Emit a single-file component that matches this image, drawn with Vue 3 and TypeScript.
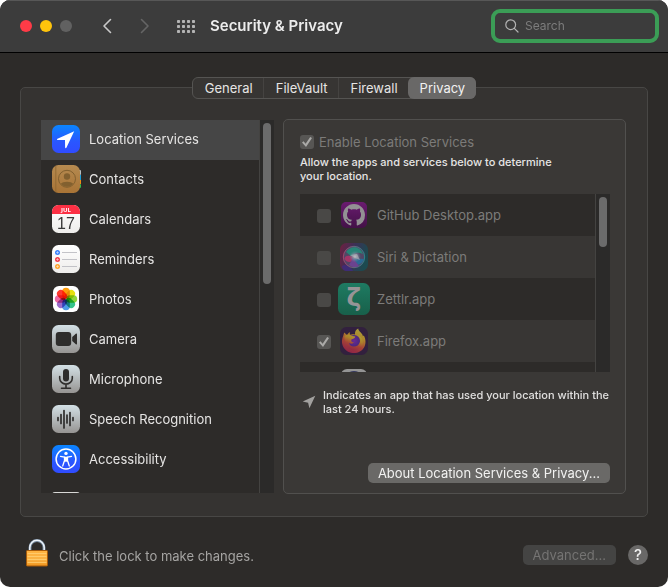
<script setup lang="ts">
import { ref } from 'vue'

interface SidebarItem {
  id: string
  label: string
}

interface AppEntry {
  id: string
  label: string
  allowed: boolean
}

const tabs: string[] = ['General', 'FileVault', 'Firewall', 'Privacy']
const activeTab = ref('Privacy')
const query = ref('')

const services: SidebarItem[] = [
  { id: 'location', label: 'Location Services' },
  { id: 'contacts', label: 'Contacts' },
  { id: 'calendars', label: 'Calendars' },
  { id: 'reminders', label: 'Reminders' },
  { id: 'photos', label: 'Photos' },
  { id: 'camera', label: 'Camera' },
  { id: 'microphone', label: 'Microphone' },
  { id: 'speech', label: 'Speech Recognition' },
  { id: 'accessibility', label: 'Accessibility' },
]
const selected = ref('location')

const apps: AppEntry[] = [
  { id: 'github', label: 'GitHub Desktop.app', allowed: false },
  { id: 'siri', label: 'Siri & Dictation', allowed: false },
  { id: 'zettlr', label: 'Zettlr.app', allowed: false },
  { id: 'firefox', label: 'Firefox.app', allowed: true },
]

const petals: { color: string; angle: number }[] = [
  { color: '#ff9d0a', angle: 0 },
  { color: '#e6e010', angle: 45 },
  { color: '#8fd53c', angle: 90 },
  { color: '#35c48b', angle: 135 },
  { color: '#4f9be8', angle: 180 },
  { color: '#9b6ccb', angle: 225 },
  { color: '#ee6aa5', angle: 270 },
  { color: '#ff3b30', angle: 315 },
]

const gridDots: { x: number; y: number }[] = []
for (let row = 0; row < 3; row++) {
  for (let col = 0; col < 4; col++) gridDots.push({ x: col * 5, y: row * 5 })
}
</script>

<template>
  <div class="window">
    <header class="toolbar">
      <div class="lights">
        <button class="light close" aria-label="Close"></button>
        <button class="light minimize" aria-label="Minimize"></button>
        <button class="light zoom" aria-label="Zoom" disabled></button>
      </div>
      <nav class="history">
        <button class="plain" aria-label="Back">
          <svg width="10" height="16" viewBox="0 0 10 16"><path d="M8.5 1.5 2 8l6.500 6.500" fill="none" stroke="#c9c9c9" stroke-width="1.600" stroke-linecap="round" stroke-linejoin="round" /></svg>
        </button>
        <button class="plain" aria-label="Forward" disabled>
          <svg width="10" height="16" viewBox="0 0 10 16"><path d="M1.500 1.500 8 8l-6.500 6.500" fill="none" stroke="#656565" stroke-width="1.600" stroke-linecap="round" stroke-linejoin="round" /></svg>
        </button>
      </nav>
      <button class="plain" aria-label="Show All">
        <svg width="18" height="13" viewBox="0 0 18 13">
          <rect v-for="dot in gridDots" :key="`${dot.x}-${dot.y}`" :x="dot.x" :y="dot.y" width="3" height="3" rx="0.800" fill="#b4b4b4" />
        </svg>
      </button>
      <h1>Security &amp; Privacy</h1>
      <label class="search">
        <svg width="14" height="14" viewBox="0 0 14 14" fill="none" stroke="#b3b3b3" stroke-width="1.200" stroke-linecap="round">
          <circle cx="5.700" cy="5.700" r="4.900" /><path d="m9.300 9.300 3.700 3.700" />
        </svg>
        <input v-model="query" type="text" placeholder="Search" aria-label="Search" />
      </label>
    </header>

    <main class="content">
      <div class="tabs" role="tablist">
        <button v-for="tab in tabs" :key="tab" class="tab" :class="{ active: tab === activeTab }" role="tab" :aria-selected="tab === activeTab" @click="activeTab = tab">{{ tab }}</button>
      </div>

      <div class="panel">
        <aside class="sidebar">
          <ul class="services">
            <li v-for="item in services" :key="item.id">
              <button class="service" :class="{ selected: item.id === selected }" @click="selected = item.id">
                <svg class="icon" viewBox="0 0 28 28" aria-hidden="true">
                  <defs>
                    <linearGradient id="blueTile" x2="0" y2="1"><stop stop-color="#0a86ff" /><stop offset="0.600" stop-color="#2a56ff" /><stop offset="1" stop-color="#304cff" /></linearGradient>
                    <linearGradient id="greyTile" x2="0" y2="1"><stop stop-color="#d3e0e5" /><stop offset="1" stop-color="#969492" /></linearGradient>
                    <linearGradient id="brownTile" x2="0" y2="1"><stop stop-color="#b58a50" /><stop offset="1" stop-color="#a97436" /></linearGradient>
                    <linearGradient id="whiteTile" x2="0" y2="1"><stop stop-color="#ffffff" /><stop offset="1" stop-color="#eeedeb" /></linearGradient>
                  </defs>
                  <template v-if="item.id === 'location'">
                    <rect width="28" height="28" rx="6.500" fill="url(#blueTile)" />
                    <path d="M22.200 6.300 5.500 13.700c-.8.400-.6 1.300.3 1.300l7.200.1.100 7.200c0 1 1 1.200 1.400.300Z" fill="#fff" />
                  </template>
                  <template v-else-if="item.id === 'contacts'">
                    <rect x="20" y="5" width="9" height="5" rx="1" fill="#b8bec0" />
                    <rect x="20" y="10" width="9" height="5" fill="#1c9ed8" />
                    <rect x="20" y="15" width="9" height="4" fill="#ef8a17" />
                    <rect x="20" y="19" width="9" height="4" rx="1" fill="#38b54a" />
                    <rect width="28" height="28" rx="6.500" fill="url(#brownTile)" />
                    <path d="M3.800.8v26.400" stroke="#8d6430" stroke-width="0.800" />
                    <circle cx="15" cy="13.800" r="8.500" fill="none" stroke="#82602f" />
                    <circle cx="15" cy="11.500" r="3.200" fill="#82602f" />
                    <path d="M8.900 18.800c1.500-2.700 10.700-2.700 12.200 0-2.900 4-9.300 4-12.200 0Z" fill="#82602f" />
                  </template>
                  <template v-else-if="item.id === 'calendars'">
                    <rect width="28" height="28" rx="6.500" fill="url(#whiteTile)" />
                    <path d="M0 9V6.500A6.500 6.500 0 0 1 6.500 0h15A6.500 6.500 0 0 1 28 6.500V9Z" fill="#fc3044" />
                    <text class="month" x="14" y="7" text-anchor="middle">JUL</text>
                    <text class="day" x="14" y="24" text-anchor="middle">17</text>
                  </template>
                  <template v-else-if="item.id === 'reminders'">
                    <rect width="28" height="28" rx="6.500" fill="url(#whiteTile)" />
                    <path d="M10 7.500h15M10 14.500h15M10 21.500h15" stroke="#bcbcc2" stroke-width="0.900" />
                    <circle cx="5.500" cy="7.500" r="2.500" fill="#3a82ff" /><circle cx="5.500" cy="14.500" r="2.500" fill="#f23c4b" /><circle cx="5.500" cy="21.500" r="2.500" fill="#ffa52e" />
                    <path d="M4 7.500h3M5.500 6v3M4 14.500h3M5.500 13v3M4 21.500h3M5.500 20v3" stroke="#fff" stroke-width="0.400" />
                  </template>
                  <template v-else-if="item.id === 'photos'">
                    <rect x="1" y="1" width="26" height="26" rx="6" fill="#fff" />
                    <rect v-for="petal in petals" :key="petal.angle" class="petal" x="10.200" y="2.800" width="7.600" height="11" rx="3.800" :fill="petal.color" :transform="`rotate(${petal.angle} 14 14)`" />
                  </template>
                  <template v-else-if="item.id === 'camera'">
                    <rect width="28" height="28" rx="6.500" fill="url(#greyTile)" />
                    <rect x="3.800" y="7" width="15.400" height="14" rx="3" fill="#2e2d2c" />
                    <path d="m20.200 12 3.600-3.200c.6-.5 1.200-.3 1.200.4v9.600c0 .7-.6.9-1.200.4L20.200 16Z" fill="#2e2d2c" />
                  </template>
                  <template v-else-if="item.id === 'microphone'">
                    <rect width="28" height="28" rx="6.500" fill="url(#greyTile)" />
                    <rect x="11" y="4" width="6" height="12.500" rx="3" fill="#2e2d2c" />
                    <path d="M7.700 11.500v1.800a6.300 5.800 0 0 0 12.600 0v-1.800M14 19v4M9.500 23.300h9" fill="none" stroke="#2e2d2c" stroke-width="1.600" stroke-linecap="round" />
                  </template>
                  <template v-else-if="item.id === 'speech'">
                    <rect width="28" height="28" rx="6.500" fill="url(#greyTile)" />
                    <path d="M6 12.500v3M9 9.500v9M12 5.500v17.500M15 10v8M18 7.500v13M21 12.500v3" stroke="#2e2d2c" stroke-width="1.700" stroke-linecap="round" />
                  </template>
                  <template v-else>
                    <rect width="28" height="28" rx="6.500" fill="url(#blueTile)" />
                    <circle cx="14" cy="14" r="9.900" fill="none" stroke="#fff" stroke-width="1.500" />
                    <circle cx="14" cy="8.400" r="1.700" fill="#fff" />
                    <path d="m8.500 11.300 4 .9v3.300L10.700 21M19.500 11.300l-4 .9v3.300l1.800 5.500" fill="none" stroke="#fff" stroke-width="1.300" stroke-linecap="round" stroke-linejoin="round" />
                    <path d="M12 11.700h4v5h-4Z" fill="#fff" />
                  </template>
                </svg>
                <span>{{ item.label }}</span>
              </button>
            </li>
            <li class="peek"><span></span></li>
          </ul>
          <div class="track"><div class="thumb long"></div></div>
        </aside>

        <section class="details">
          <label class="enable">
            <input type="checkbox" checked disabled />
            <span>Enable Location Services</span>
          </label>
          <p class="hint">Allow the apps and services below to determine your location.</p>

          <div class="apps">
            <ul class="app-list">
              <li v-for="app in apps" :key="app.id">
                <label class="app">
                  <input type="checkbox" :checked="app.allowed" disabled />
                  <svg class="app-icon" viewBox="0 0 32 32" aria-hidden="true">
                    <template v-if="app.id === 'github'">
                      <defs><linearGradient id="hubTile" x2="0" y2="1"><stop stop-color="#6a1b70" /><stop offset="1" stop-color="#431147" /></linearGradient></defs>
                      <rect x="3" y="3" width="26" height="26" rx="5" fill="url(#hubTile)" />
                      <g transform="translate(5 5) scale(1.375)">
                        <path fill="#929193" d="M8 0C3.58 0 0 3.58 0 8c0 3.540 2.290 6.530 5.470 7.590.4.070.55-.17.55-.38 0-.19-.01-.82-.01-1.490-2.010.37-2.530-.49-2.690-.94-.09-.23-.48-.94-.82-1.130-.28-.15-.68-.52-.01-.53.63-.01 1.080.58 1.230.82.72 1.210 1.870.87 2.330.66.07-.52.28-.87.51-1.070-1.780-.2-3.640-.89-3.640-3.950 0-.87.31-1.590.82-2.150-.08-.2-.36-1.020.08-2.120 0 0 .67-.21 2.200.82.64-.18 1.320-.27 2-.27.68 0 1.360.09 2 .27 1.530-1.040 2.200-.82 2.200-.82.44 1.100.16 1.920.08 2.120.51.56.82 1.270.82 2.150 0 3.070-1.870 3.750-3.650 3.950.29.25.54.73.54 1.480 0 1.070-.01 1.930-.01 2.200 0 .21.15.46.55.38A8.013 8.013 0 0016 8c0-4.420-3.580-8-8-8z" />
                      </g>
                    </template>
                    <template v-else-if="app.id === 'siri'">
                      <defs>
                        <linearGradient id="siriTile" x2="1" y2="0.300"><stop stop-color="#701f40" /><stop offset="0.500" stop-color="#3c3056" /><stop offset="1" stop-color="#1c4a50" /></linearGradient>
                        <linearGradient id="siriRing" x2="1"><stop stop-color="#aa4870" /><stop offset="1" stop-color="#2a8c90" /></linearGradient>
                        <radialGradient id="siriGlow"><stop stop-color="#cccbcd" /><stop offset="0.300" stop-color="#9b9eab" stop-opacity="0.800" /><stop offset="1" stop-color="#5d7990" stop-opacity="0" /></radialGradient>
                      </defs>
                      <rect x="2" y="2" width="28" height="28" rx="6.500" fill="url(#siriTile)" />
                      <path d="M4 25c3-2 8-1 11 5H9c-3 0-5-2-5-5Z" fill="#3e2b84" opacity="0.700" />
                      <circle cx="16" cy="16" r="10.700" fill="#514765" stroke="url(#siriRing)" stroke-width="0.900" />
                      <path d="M8 11c5-7 14-6 17 2-5-2-9-2-11 3Z" fill="#288477" />
                      <path d="M6.500 18c0-4 6-4 10-1-2 5-8 5-10 1Z" fill="#a43568" />
                      <path d="m14 17 12 1c-1 3-3 5-6 6Z" fill="#2a6994" />
                      <path d="m15 17 6 8c-3 2-8 1-10-1Z" fill="#6b438f" />
                      <circle cx="17" cy="15.500" r="6" fill="url(#siriGlow)" />
                      <path d="m12 14 7-1 3 6-5-2Z" fill="#b2b3bb" opacity="0.600" />
                    </template>
                    <template v-else-if="app.id === 'zettlr'">
                      <defs><linearGradient id="zetaTile" x2="0" y2="1"><stop stop-color="#1e7b62" /><stop offset="1" stop-color="#18604a" /></linearGradient></defs>
                      <rect width="32" height="32" rx="6.500" fill="url(#zetaTile)" />
                      <text class="zeta" x="16" y="23" text-anchor="middle">ζ</text>
                    </template>
                    <template v-else>
                      <defs>
                        <linearGradient id="foxFire" x1="0.800" x2="0.350" y2="1"><stop stop-color="#aaa43a" /><stop offset="0.350" stop-color="#ad832b" /><stop offset="0.650" stop-color="#a44236" /><stop offset="1" stop-color="#8e2347" /></linearGradient>
                        <radialGradient id="foxGlobe"><stop stop-color="#692a91" /><stop offset="1" stop-color="#48277f" /></radialGradient>
                      </defs>
                      <rect x="2" y="2" width="28" height="28" rx="6.500" fill="#32203e" />
                      <path d="M6.200 7.500 9 10l2.500-3 .5 2.800c1.700-.8 3.400-.8 5-.2-.4-2.700 1-5 3.200-6 .3 3.300 4.300 4.300 4.700 7.700l1-.8c4.500 9-1 17.600-9.900 17.600C7.500 28.100 1.500 20 5 11.500Z" fill="url(#foxFire)" />
                      <circle cx="16" cy="15.900" r="6" fill="url(#foxGlobe)" />
                      <path d="M6.500 11c2-1.700 5-1.800 6.700-.2l4 .8c.4 1.800-2.700 2.200-3.800 3-.5 1.900.4 3 2.600 3-1.800 2-3.700.6-5.300.6 2 4 7.500 4.500 10.300 1 2.400-3.200 1.200-7.500-1.300-9 5.200 1.200 7 9 2.700 13-6.400 5.600-16.300 1-15.900-12.200Z" fill="url(#foxFire)" />
                    </template>
                  </svg>
                  <span>{{ app.label }}</span>
                </label>
              </li>
              <li class="app-peek">
                <svg class="app-icon" viewBox="0 0 32 32" aria-hidden="true"><rect x="3" y="2" width="26" height="26" rx="6" fill="#949494" /><circle cx="16" cy="14" r="10" fill="#35385e" /></svg>
              </li>
            </ul>
            <div class="track"><div class="thumb short"></div></div>
          </div>

          <div class="note">
            <svg width="14" height="14" viewBox="0 0 14 14" aria-hidden="true"><path d="M13.300.7.700 6.500l5.400 1.300 1.300 5.500Z" fill="#a2a19f" /></svg>
            <p>Indicates an app that has used your location within the last 24 hours.</p>
          </div>
          <button class="push about">About Location Services &amp; Privacy...</button>
        </section>
      </div>
    </main>

    <footer class="footer">
      <button class="plain" aria-label="Unlock">
        <svg width="22" height="28" viewBox="0 0 22 28">
          <defs><linearGradient id="brass" x2="0" y2="1"><stop stop-color="#ffb340" /><stop offset="0.600" stop-color="#f9b143" /><stop offset="1" stop-color="#ef941d" /></linearGradient></defs>
          <path d="M4 12V8.500a7 7 0 0 1 14 0V12" fill="none" stroke="#72869a" stroke-width="3" />
          <path d="M3.800 12V8.500a7.200 7.200 0 0 1 14.400 0V12" fill="none" stroke="#edf3f9" stroke-width="1.500" />
          <rect x="0.500" y="11.500" width="21" height="15.500" rx="0.800" fill="url(#brass)" stroke="#a65a0a" />
          <path d="M1.500 14.500h19M1.500 17.500h19M1.500 20.500h19M1.500 23.500h19" stroke="#ffd47c" stroke-opacity="0.700" />
        </svg>
      </button>
      <p>Click the lock to make changes.</p>
      <button class="push advanced" disabled>Advanced...</button>
      <button class="help" aria-label="Help">?</button>
    </footer>
  </div>
</template>

<style>
body {
  background: #fff;
}
</style>

<style scoped>
.window {
  display: flex;
  flex-direction: column;
  box-sizing: border-box;
  height: 100vh;
  overflow: hidden;
  border-radius: 10px;
  background: #2d2b29;
  color: #e6e5e4;
  font: 13px/16px Inter, "Liberation Sans", sans-serif;
}

button {
  padding: 0;
  border: 0;
  background: none;
  color: inherit;
  font: inherit;
}

h1,
p,
ul {
  margin: 0;
  padding: 0;
  list-style: none;
}

svg {
  display: block;
  flex: none;
}

.toolbar {
  display: flex;
  align-items: center;
  box-sizing: border-box;
  height: 53px;
  padding: 0 9px 1px 20px;
  border-top: 1px solid #575757;
  border-bottom: 1px solid #000;
  background: #3c3c3c;
}

.lights {
  display: flex;
  gap: 8px;
}

.light {
  width: 12px;
  height: 12px;
  border-radius: 50%;
}

.close {
  background: #ff3b47;
}

.minimize {
  background: #ffc40c;
}

.zoom {
  background: #616161;
}

.history {
  display: flex;
  gap: 28px;
  margin: 0 27px 0 30px;
}

h1 {
  margin-left: 15px;
  color: #ececec;
  font-size: 15px;
  line-height: 20px;
  font-weight: 600;
}

.search {
  display: flex;
  align-items: center;
  gap: 6px;
  box-sizing: border-box;
  width: 168px;
  height: 34px;
  margin-left: auto;
  padding: 0 8px 0 10px;
  border: 4px solid #3b9d56;
  border-radius: 9px;
}

.search input {
  width: 100%;
  min-width: 0;
  padding: 0;
  border: 0;
  outline: 0;
  background: none;
  color: #dfdedd;
  font: inherit;
  font-size: 12px;
}

.search input::placeholder {
  color: #7c7c7c;
}

.content {
  display: flex;
  flex: 1;
  flex-direction: column;
  min-height: 0;
  padding: 24px 20px 0;
}

.tabs {
  z-index: 1;
  display: flex;
  align-self: center;
  box-sizing: border-box;
  height: 22px;
  border: 1px solid #555452;
  border-radius: 6px;
  background: #373533;
}

.tab {
  padding: 0 11px 1px 12px;
}

.tab + .tab:not(.active) {
  box-shadow: -1px 0 #454341;
}

.tab.active {
  margin: -1px;
  border-radius: 6px;
  background: #696867;
  color: #f2f2f2;
}

.panel {
  display: flex;
  flex: 1;
  gap: 9px;
  min-height: 0;
  margin-top: -12px;
  padding: 31px 21px 22px 20px;
  border: 1px solid #484745;
  border-radius: 5px;
  background: #353331;
}

.sidebar {
  display: flex;
  width: 233px;
  margin: 1px 0;
  background: #2d2b29;
}

.services {
  flex: 1;
  overflow: hidden;
}

.service {
  display: flex;
  align-items: center;
  gap: 9px;
  box-sizing: border-box;
  width: 100%;
  height: 40px;
  padding: 0 11px 2px;
  text-align: left;
}

.service span,
.app span {
  padding-bottom: 1px;
}

.service.selected {
  background: #464646;
}

.icon {
  width: 28px;
  height: 28px;
  overflow: visible;
}

.month {
  fill: #fff;
  font: 700 6px "Open Sans", sans-serif;
}

.day {
  fill: #3a3a3a;
  font: 300 16px/16px "Liberation Sans", sans-serif;
}

.petal {
  mix-blend-mode: multiply;
}

.peek {
  padding: 12px 11px;
}

.peek span {
  display: block;
  width: 28px;
  height: 28px;
  border-radius: 3px;
  background: #d8d8d6;
}

.track {
  box-sizing: border-box;
  width: 15px;
  padding: 3px 2px 0 3px;
  border-left: 1px solid #444341;
  background: #2b2a29;
}

.thumb {
  width: 8px;
  border-radius: 4px;
  background: #6b6b6b;
}

.long {
  height: 161px;
}

.short {
  height: 50px;
}

.details {
  display: flex;
  flex: 1;
  flex-direction: column;
  min-width: 0;
  padding: 14px 15px 10px 16px;
  border: 1px solid #51504e;
  border-radius: 5px;
  background: #3a3836;
}

.enable,
.app {
  display: flex;
  align-items: center;
  color: #7c7b79;
}

.enable {
  gap: 5px;
}

input[type="checkbox"] {
  display: grid;
  flex: none;
  place-content: center;
  width: 14px;
  height: 14px;
  margin: 0;
  border-radius: 3px;
  appearance: none;
  background: #494846;
}

input[type="checkbox"]:checked {
  background: #575654;
}

input[type="checkbox"]:checked::before {
  width: 10px;
  height: 10px;
  background: #aaa9a7;
  clip-path: polygon(0 56%, 16% 42%, 36% 68%, 82% 0, 100% 10%, 40% 100%);
  content: "";
}

.hint {
  width: 270px;
  margin: 5px 0 11px;
  color: #e6e5e4;
  font-size: 11px;
  line-height: 14px;
  font-weight: 500;
}

.apps {
  display: flex;
  height: 178px;
  background: #2d2b29;
}

.app-list {
  flex: 1;
  overflow: hidden;
}

.app-list li:nth-child(even) {
  background: #383634;
}

.app {
  box-sizing: border-box;
  height: 42px;
  padding-left: 17px;
}

.app input {
  margin-top: 2px;
}

.app-icon {
  width: 32px;
  height: 32px;
  margin: 0 7px;
}

.zeta {
  fill: #969496;
  font: 700 25px "DejaVu Sans", sans-serif;
}

.app-peek {
  padding: 5px 31px;
}

.note {
  display: flex;
  align-items: center;
  gap: 7px;
  margin-top: 16px;
  padding-left: 2px;
  color: #e0dfde;
  font-size: 11px;
  line-height: 14px;
  font-weight: 500;
}

.push {
  height: 20px;
  padding: 0 10px 1px;
  border-radius: 5px;
  background: #6a6967;
  color: #f2f2f1;
}

.about {
  align-self: flex-end;
  margin-top: auto;
}

.footer {
  display: flex;
  align-items: center;
  height: 70px;
  padding: 0 20px 0 26px;
}

.footer .plain {
  margin-top: 2px;
}

.footer p {
  margin: 8px auto 0 11px;
  color: #a5a4a2;
}

.footer .push,
.help {
  margin-top: 6px;
}

.advanced {
  background: #444443;
  color: #757473;
}

.help {
  width: 20px;
  height: 20px;
  margin-left: 12px;
  border-radius: 50%;
  background: #696867;
  color: #f0f0f0;
  font-size: 15px;
  line-height: 20px;
  font-weight: 500;
}
</style>
